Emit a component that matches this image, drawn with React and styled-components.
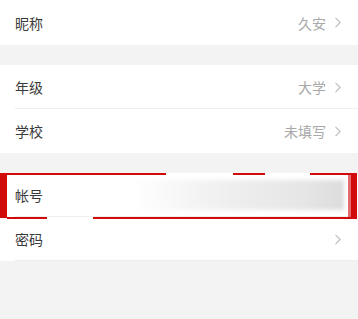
import React from "react";
import styled, { createGlobalStyle } from "styled-components";

const GlobalStyle = createGlobalStyle`
    html, body {
        margin: 0;
        padding: 0;
        background-color: #f3f3f3;
        font-family: "Noto Sans CJK SC", "Noto Sans", sans-serif;
    }
`;

const Page = styled.div`
    width: 358px;
    height: 319px;
    background-color: #f3f3f3;
    overflow: hidden;
`;

const Group = styled.div`
    position: relative;
    background-color: #fff;
    margin-bottom: ${(p) => p.$gap || 20}px;
`;

const Row = styled.div`
    position: relative;
    display: flex;
    align-items: center;
    height: ${(p) => p.$h || 44}px;
    padding: 0 17px 0 15px;
    box-sizing: border-box;
    &:not(:last-child)::after {
        content: "";
        position: absolute;
        left: 15px;
        right: 0;
        bottom: 0;
        height: 1px;
        background-color: #eeeeee;
    }
    .label {
        font-size: 14px;
        color: #3a3a3a;
        flex: 1;
    }
    .value {
        font-size: 14px;
        color: #a8a8a8;
        margin-right: 9px;
    }
`;

const Blurred = styled.div`
    width: 212px;
    height: 30px;
    margin-right: -3px;
    background: linear-gradient(90deg, #ffffff 0%, #f0f0f0 40%, #e6e6e6 80%, #dcdcdc 100%);
    filter: blur(2px);
`;

const Mark = styled.svg`
    position: absolute;
    left: 0;
    top: 0;
    width: 358px;
    height: 46px;
    pointer-events: none;
`;

const Chevron = () => (
    <svg width="6" height="11" viewBox="0 0 6 11">
        <polyline
            points="0.5,0.8 5.2,5.5 0.5,10.2"
            fill="none"
            stroke="#bdbdbd"
            strokeWidth="1.1"
        />
    </svg>
);

const Item = ({ label, value, arrow = true, h }) => (
    <Row $h={h}>
        <span className="label">{label}</span>
        {value && <span className="value">{value}</span>}
        {arrow && <Chevron />}
    </Row>
);

const RedBox = () => (
    <Mark viewBox="0 0 358 46">
        <g fill="#d10a0a">
            <rect x="0" y="0" width="7" height="45" />
            <rect x="351" y="0" width="6" height="46" />
            <rect x="7" y="0" width="159" height="2" />
            <rect x="233" y="0" width="32" height="2" />
            <rect x="310" y="0" width="42" height="2" />
            <rect x="7" y="44" width="40" height="2" />
            <rect x="93" y="44" width="259" height="2" />
            <rect x="348" y="0" width="3" height="46" opacity="0.6" />
        </g>
    </Mark>
);

export default function App() {
    return (
        <>
            <GlobalStyle />
            <Page>
                <Group>
                    <Item label="昵称" value="久安" h={45} />
                </Group>
                <Group>
                    <Item label="年级" value="大学" />
                    <Item label="学校" value="未填写" />
                </Group>
                <Group $gap={0}>
                    <Row>
                        <span className="label">帐号</span>
                        <Blurred />
                    </Row>
                    <Item label="密码" />
                    <RedBox />
                </Group>
            </Page>
        </>
    );
}
